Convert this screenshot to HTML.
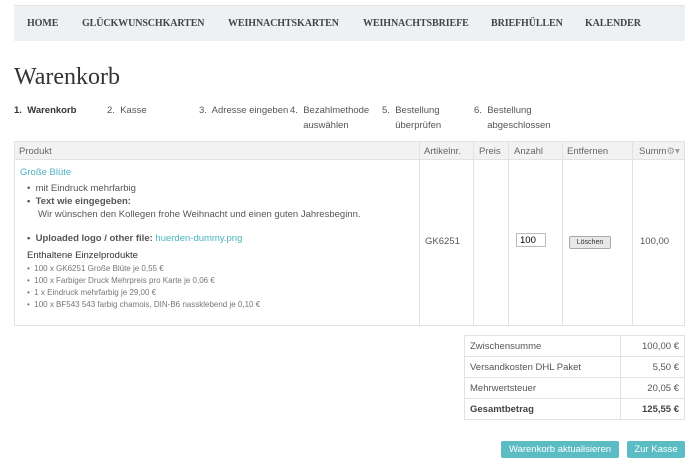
<!DOCTYPE html>
<html><head><meta charset="utf-8"><style>
body{margin:0;width:700px;height:475px;background:#fff;position:relative;overflow:hidden;font-family:"Liberation Sans",sans-serif;color:#555;}
.a{position:absolute;white-space:nowrap;}
.nav{position:absolute;left:14px;top:5px;width:671px;height:35px;background:#eef1f4;border-top:1px solid #e4e4e4}
.nav span{position:absolute;top:12px;font-family:"Liberation Serif",serif;font-weight:bold;font-size:10px;color:#444;letter-spacing:-0.1px}
.st{font-size:9.5px;line-height:15px;color:#555}
.t{position:absolute;border:1px solid #e2e2e2;box-sizing:border-box}
.vl{position:absolute;top:141px;height:184px;width:1px;background:#e2e2e2}
.h{font-size:9.5px;color:#666;top:146px}
.s{font-size:8px;color:#777}
.b{position:absolute;background:#5bbcc4;color:#fff;font-size:9.5px;text-align:center;line-height:17px;border-radius:2px}
</style></head><body>
<div class="nav">
<span style="left:13px">HOME</span><span style="left:68px">GLÜCKWUNSCHKARTEN</span><span style="left:214px">WEIHNACHTSKARTEN</span><span style="left:349px">WEIHNACHTSBRIEFE</span><span style="left:477px">BRIEFHÜLLEN</span><span style="left:571px">KALENDER</span>
</div>
<div class="a" style="left:14px;top:64px;font-family:'Liberation Serif',serif;font-size:24px;color:#333">Warenkorb</div>
<div class="a st" style="left:14px;top:103px;color:#333;font-weight:bold">1.&nbsp; Warenkorb</div>
<div class="a st" style="left:107px;top:103px">2.&nbsp; Kasse</div>
<div class="a st" style="left:199px;top:103px">3.&nbsp; Adresse eingeben</div>
<div class="a st" style="left:290px;top:103px">4.&nbsp; Bezahlmethode<br>&nbsp;&nbsp;&nbsp;&nbsp;&nbsp;auswählen</div>
<div class="a st" style="left:382px;top:103px">5.&nbsp; Bestellung<br>&nbsp;&nbsp;&nbsp;&nbsp;&nbsp;überprüfen</div>
<div class="a st" style="left:474px;top:103px">6.&nbsp; Bestellung<br>&nbsp;&nbsp;&nbsp;&nbsp;&nbsp;abgeschlossen</div>

<div class="t" style="left:14px;top:141px;width:671px;height:185px"></div>
<div class="a" style="left:15px;top:142px;width:669px;height:17px;background:#f2f2f2;border-bottom:1px solid #e2e2e2"></div>
<div class="vl" style="left:419px"></div><div class="vl" style="left:473px"></div><div class="vl" style="left:508px"></div><div class="vl" style="left:562px"></div><div class="vl" style="left:632px"></div>
<div class="a h" style="left:19px">Produkt</div><div class="a h" style="left:424px">Artikelnr.</div><div class="a h" style="left:479px">Preis</div><div class="a h" style="left:514px">Anzahl</div><div class="a h" style="left:567px">Entfernen</div><div class="a h" style="left:639px">Summ<span style="color:#999">⚙▾</span></div>
<div class="a" style="left:20px;top:167px;font-size:9.5px;color:#4bb3c0">Große Blüte</div>
<div class="a" style="left:27px;top:183px;font-size:9.5px">•&nbsp; mit Eindruck mehrfarbig</div>
<div class="a" style="left:27px;top:196px;font-size:9.5px;font-weight:bold">•&nbsp; Text wie eingegeben:</div>
<div class="a" style="left:38px;top:209px;font-size:9.5px">Wir wünschen den Kollegen frohe Weihnacht und einen guten Jahresbeginn.</div>
<div class="a" style="left:27px;top:233px;font-size:9.5px"><b>•&nbsp; Uploaded logo / other file:</b> <span style="color:#4bb3c0">huerden-dummy.png</span></div>
<div class="a" style="left:27px;top:250px;font-size:9.5px;color:#333">Enthaltene Einzelprodukte</div>
<div class="a s" style="left:27px;top:264px">•&nbsp; 100 x GK6251 Große Blüte je 0,55 €</div>
<div class="a s" style="left:27px;top:276px">•&nbsp; 100 x Farbiger Druck Mehrpreis pro Karte je 0,06 €</div>
<div class="a s" style="left:27px;top:288px">•&nbsp; 1 x Eindruck mehrfarbig je 29,00 €</div>
<div class="a s" style="left:27px;top:300px">•&nbsp; 100 x BF543 543 farbig chamois, DIN-B6 nassklebend je 0,10 €</div>
<div class="a" style="left:425px;top:236px;font-size:9.5px">GK6251</div>
<div class="a" style="left:516px;top:233px;width:30px;height:14px;border:1px solid #bbb;font-size:9.5px;color:#000;line-height:14px;padding-left:3px;box-sizing:border-box">100</div>
<div class="a" style="left:569px;top:236px;width:40px;height:11px;border:1px solid #aaa;border-radius:2px;background:#e8e8e8;font-size:7px;color:#333;text-align:center;line-height:11px">Löschen</div>
<div class="a" style="left:640px;top:236px;font-size:9.5px">100,00</div>

<div class="t" style="left:464px;top:335px;width:221px;height:85px"></div>
<div class="a" style="left:620px;top:335px;width:1px;height:85px;background:#e2e2e2"></div>
<div class="a" style="left:464px;top:356px;width:221px;height:1px;background:#e2e2e2"></div>
<div class="a" style="left:464px;top:377px;width:221px;height:1px;background:#e2e2e2"></div>
<div class="a" style="left:464px;top:398px;width:221px;height:1px;background:#e2e2e2"></div>
<div class="a" style="left:470px;top:341px;font-size:9.5px">Zwischensumme</div><div class="a" style="right:21px;top:341px;font-size:9.5px">100,00 €</div>
<div class="a" style="left:470px;top:362px;font-size:9.5px">Versandkosten DHL Paket</div><div class="a" style="right:21px;top:362px;font-size:9.5px">5,50 €</div>
<div class="a" style="left:470px;top:383px;font-size:9.5px">Mehrwertsteuer</div><div class="a" style="right:21px;top:383px;font-size:9.5px">20,05 €</div>
<div class="a" style="left:470px;top:404px;font-size:9.5px;font-weight:bold;color:#444">Gesamtbetrag</div><div class="a" style="right:21px;top:404px;font-size:9.5px;font-weight:bold;color:#444">125,55 €</div>
<div class="b" style="left:501px;top:441px;width:118px">Warenkorb aktualisieren</div>
<div class="b" style="left:627px;top:441px;width:58px">Zur Kasse</div>
</body></html>
